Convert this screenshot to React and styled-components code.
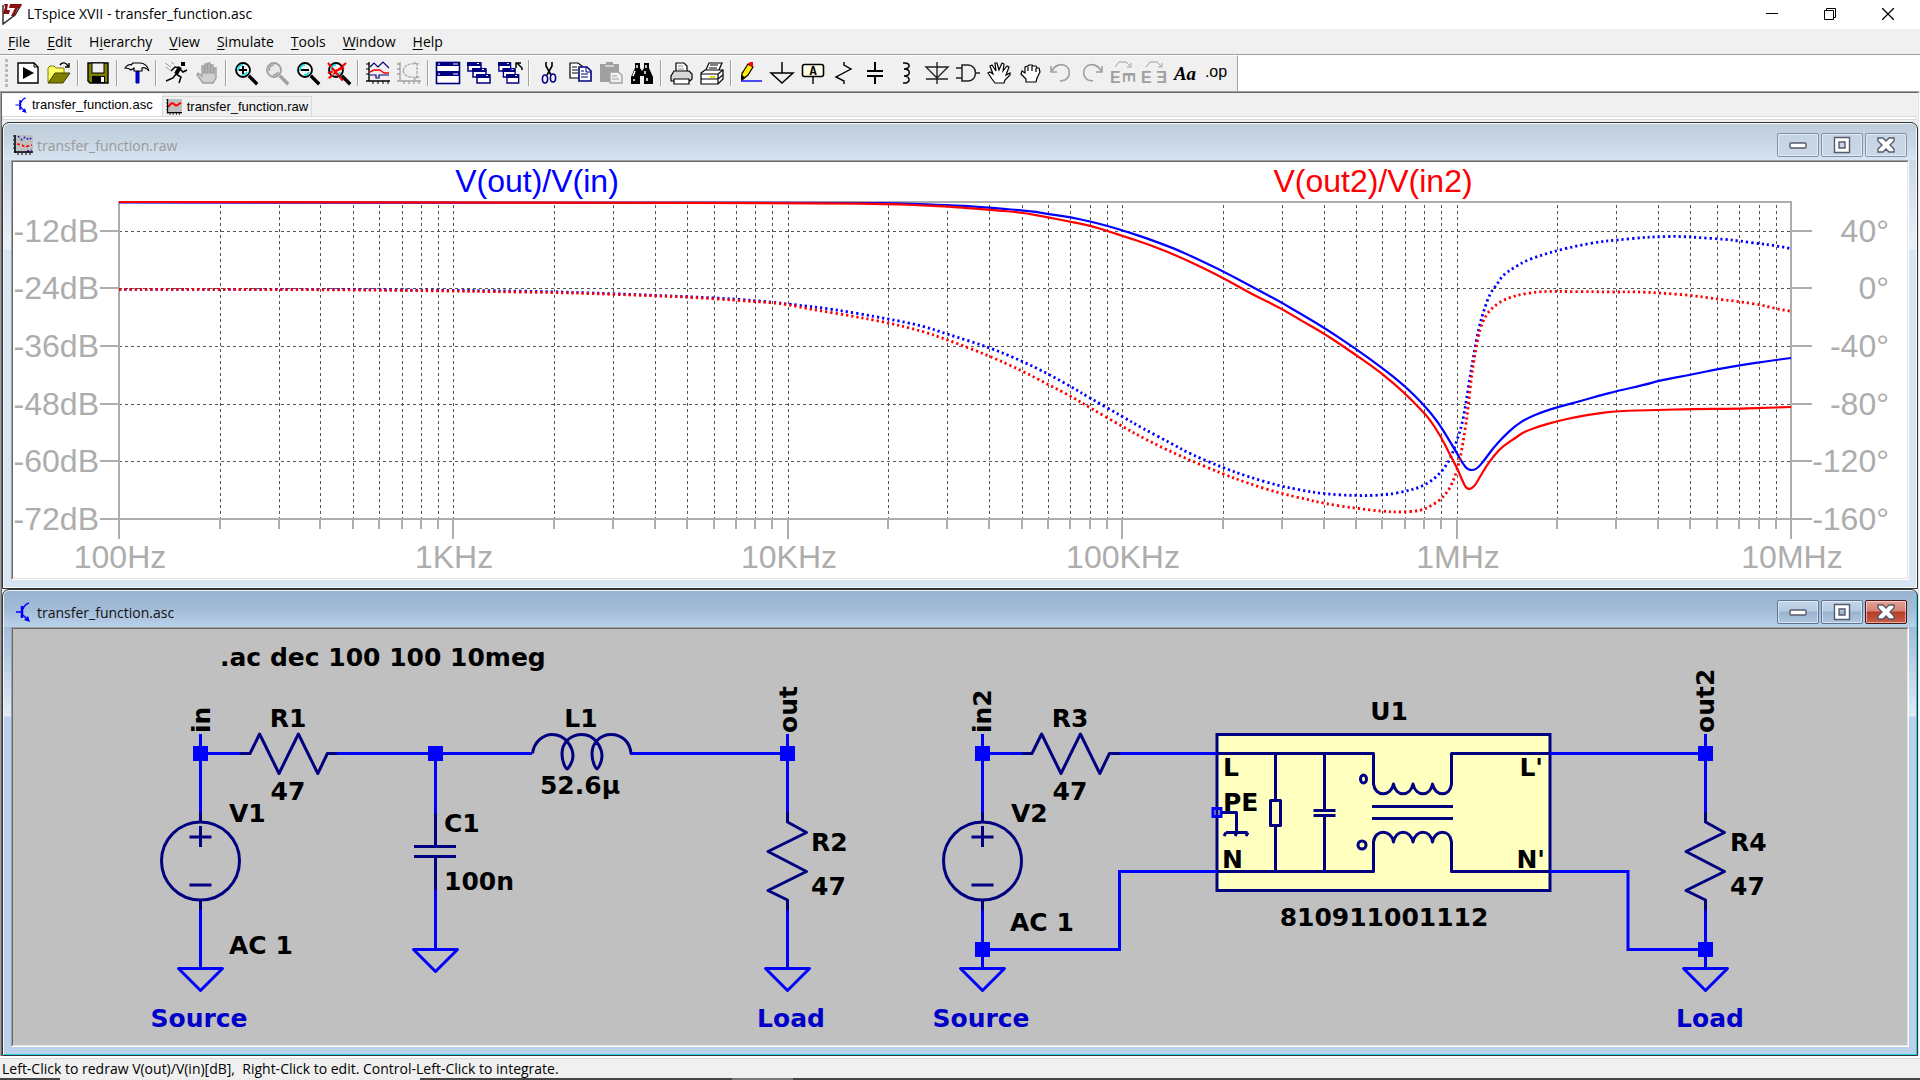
import React from 'react'
import styled, { createGlobalStyle } from 'styled-components';

const NAVY = '#000080';
const WIRE = '#0000ff';
const AXIS = '#adadad';

const GlobalStyle = createGlobalStyle`
  *{
    box-sizing: border-box;
  }

  body{
    margin: 0;
    background: #f0f0f0;
    font-family: "Open Sans", "Noto Sans", sans-serif;
    font-size: 14px;
    color: #000;
  }

  button{
    font: inherit;
    color: inherit;
    background: none;
    border: none;
    padding: 0;
  }
`;

/* ---------- small drawings ---------- */

const LogoIcon = () => (
  <svg width="20" height="22" viewBox="0 0 20 22" aria-hidden="true">
    <path d="M1 2V21L13 12L19 2" fill="#fff" stroke="#222" strokeWidth="1.4" />
    <path d="M2 1H6L5 7H8L7 11H1L3 4Z" fill="#8b1010" />
    <path d="M8 1H20L18 5H16L12 13H9L13 5H7Z" fill="#8b1010" />
  </svg>
);

const SchematicIcon = () => (
  <svg width="16" height="20" viewBox="0 0 16 20" fill="none" stroke={WIRE} strokeWidth="1.5" aria-hidden="true">
    <path d="M1 10H6M14 1C11 2 9 4 8 7" />
    <path d="M7 4V16" strokeWidth="2.5" />
    <path d="M8 13L13 18" />
    <path d="M15 20L13 14L9 18Z" fill={WIRE} stroke="none" />
  </svg>
);

const WaveformIcon = ({ dotted }) => (
  <svg width="20" height="20" viewBox="0 0 20 20" fill="none" aria-hidden="true">
    <rect x="3" y="0" width="17" height="17" fill="#c0c0c0" />
    {dotted
      ? <g strokeWidth="1.2">
        <path d="M5 1L9 5L12 2L16 5L19 2M14 16L19 15" stroke="#0000c0" strokeDasharray="2 2" />
        <path d="M4 9L9 10L12 12L19 10" stroke="#f00" strokeWidth="1.6" strokeDasharray="3 2" />
      </g>
      : <path d="M3 10C7 3 9 5 12 8C14 9 16 5 19 5" stroke="#f00" strokeWidth="2.4" />}
    <path d="M2 0V18M1 17H20" stroke="#000" strokeWidth="1.6" />
    <path d="M1 1H0M1 5H0M1 9H0M1 13H0M5 17V20M9 17V20M13 17V20M17 17V20" stroke="#000" />
  </svg>
);

const Magnifier = ({ gray, children }) => (
  <>
    <path d="M16 16L22 22" stroke={gray ? '#a0a0a0' : '#000'} strokeWidth="3.4" strokeLinecap="square" />
    <circle cx="9" cy="9" r="7" fill={gray ? '#e8e8e8' : '#f4f4f4'} stroke={gray ? '#a0a0a0' : '#000'} strokeWidth="1.8" />
    <path d="M4 10C4 6 6 4 9 4M13 11C12 14 10 14 8 14" stroke={gray ? '#a0a0a0' : '#00e5e5'} strokeWidth="1.6" fill="none" />
    {children}
  </>
);

const CascadeShape = () => (
  <>
    {[[0, 1], [5, 7], [9, 13]].map(([x, y]) => (
      <g key={x}>
        <rect x={x + 1} y={y + 1} width="13" height="8" fill="#fff" stroke={NAVY} strokeWidth="1.5" />
        <path d={`M${x} ${y + 2}H${x + 14}`} stroke={NAVY} strokeWidth="4" />
        <path d={`M${x + 10} ${y + 1.5}H${x + 12}`} stroke="#fff" strokeWidth="1" />
      </g>
    ))}
  </>
);

const TOOLS = [
  { name: 'Run', draw: <><path d="M2 2H18L22 6V22H2Z" fill="#fff" stroke="#000" strokeWidth="1.4" /><path d="M18 2V6H22" fill="none" stroke="#000" /><path d="M7 6L18 12L7 18Z" /></> },
  {
    name: 'Open', draw: <>
      <path d="M1 21V7L3 5H7L9 7H17V12" fill="#ffff66" stroke="#808000" />
      <path d="M1 22L8 12H23L16 22Z" fill="#808000" stroke="#404000" />
      <path d="M13 4C15 1 19 1 21 5M22 2V6H18" fill="none" stroke="#000" strokeWidth="1.4" />
    </>
  },
  { sep: true },
  {
    name: 'Save', draw: <>
      <path d="M2 2H22V22H4L2 20Z" fill="#808000" stroke="#000" strokeWidth="1.4" />
      <rect x="6" y="2" width="12" height="10" fill="#f0f0f0" stroke="#000" />
      <rect x="6" y="15" width="13" height="7" /><rect x="15" y="16" width="3" height="5" fill="#fff" />
    </>
  },
  { sep: true },
  {
    name: 'Control panel', draw: <>
      <path d="M11 10H14V22H11Z" fill="#0000e0" stroke="#0000a0" />
      <path d="M0 7C2 4 4 3 6 4L8 2H15C19 2 23 5 24 10C21 6 19 6 17 7V10H9V7L6 9C4 7 2 7 0 7Z" fill="#f4f4f4" stroke="#000" strokeWidth="1.2" />
    </>
  },
  { sep: true },
  {
    name: 'Simulate', draw: <>
      <rect x="17" y="1" width="4" height="4" />
      <path d="M12 13L17 16L15 22M12 13L9 17L2 20M16 7L11 6L7 10M16 8L19 11L23 9" fill="none" stroke="#000" strokeWidth="1.5" />
      <path d="M16 6L12 13" stroke="#000" strokeWidth="4" />
      <path d="M1 2L7 6M2 6L6 9M7 1L10 3" stroke="#a0a0a0" />
    </>
  },
  {
    name: 'Halt', draw: <>
      <path d="M8 22L2 14L3 12L7 15V5H9V12H10V3H12V12H13V2H15V12H16V4H18V12H19V7H21V17L18 22Z" fill="#d0d0d0" stroke="#a0a0a0" strokeWidth="1.4" />
    </>
  },
  { sep: true },
  { name: 'Zoom in', draw: <Magnifier><path d="M5 9H13M9 5V13" stroke="#000" strokeWidth="2" /></Magnifier> },
  { name: 'Pan', draw: <Magnifier gray /> },
  { name: 'Zoom out', draw: <Magnifier><path d="M5 9H13" stroke="#000" strokeWidth="2" /></Magnifier> },
  { name: 'Zoom fit', draw: <Magnifier><path d="M1 2L16 20M19 2L1 18M1 12L17 7" stroke="#f00" strokeWidth="2.2" strokeDasharray="5 1" /></Magnifier> },
  { sep: true },
  {
    name: 'Autorange', draw: <g fill="none">
      <path d="M3 1V20M0 20H24" stroke="#000" strokeWidth="1.4" />
      <path d="M0 3H3M0 8H3M0 13H3M7 20V23M12 20V23M17 20V23M22 20V23" stroke="#000" />
      <path d="M4 6L8 2L12 6L17 1L23 7M4 14H10V17H13V14H23" stroke={NAVY} strokeWidth="1.2" />
      <path d="M4 11L8 9L14 9L18 12H23" stroke="#f00" strokeWidth="1.4" />
    </g>
  },
  {
    name: 'Bode to Nyquist', draw: <g fill="none" stroke="#a0a0a0">
      <path d="M3 1V20M0 20H24M0 3H3M0 8H3M0 13H3M7 20V23M12 20V23M17 20V23M22 20V23" strokeWidth="1.3" />
      <path d="M20 2V18M6 10C8 3 13 2 23 3M6 10C8 16 13 17 23 16M17 1L20 4M17 19L20 16" strokeDasharray="3 1" strokeWidth="1.2" />
    </g>
  },
  { sep: true },
  {
    name: 'Tile', draw: <>
      <rect x="0.5" y="1.5" width="23" height="21" fill="#fff" stroke={NAVY} strokeWidth="1.6" />
      <path d="M0 3H24M0 13H24" stroke={NAVY} strokeWidth="4" /><path d="M0 10.5H24" stroke={NAVY} />
      <path d="M2 3H4M17 3H22M2 13H4M17 13H22" stroke="#fff" />
    </>
  },
  { name: 'Cascade', draw: <CascadeShape /> },
  { name: 'Close all', draw: <><g transform="scale(.9 1)"><CascadeShape /></g><path d="M24 9V7L19 2M18 7V2H23" stroke="#000" strokeWidth="1.5" fill="none" /></> },
  { sep: true },
  {
    name: 'Cut', draw: <g fill="none" strokeWidth="1.6">
      <path d="M9 1V5L14 14M15 1V5L10 14" stroke="#000" />
      <ellipse cx="8" cy="18" rx="2.6" ry="4" stroke={NAVY} /><ellipse cx="16" cy="17" rx="2.6" ry="4" stroke={NAVY} />
    </g>
  },
  {
    name: 'Copy', draw: <>
      <path d="M2 2H10L14 5V17H2Z" fill="#fff" stroke="#000" strokeWidth="1.2" />
      <path d="M4 6H9M4 9H10M4 12H10" stroke="#000" />
      <path d="M11 6H19L23 10V20H11Z" fill="#fff" stroke={NAVY} strokeWidth="1.6" />
      <path d="M18 6V11H23M13 10H16M13 13H20M13 16H20" stroke={NAVY} fill="none" />
    </>
  },
  {
    name: 'Paste', draw: <>
      <path d="M1 3H7V1H14V3H20V21H1Z" fill="#a0a0a0" />
      <path d="M6 5H15" stroke="#e0e0e0" strokeWidth="1.5" />
      <path d="M11 11H19L23 14V22H11Z" fill="#f0f0f0" stroke="#a0a0a0" strokeWidth="1.3" />
      <path d="M13 15H18M13 18H20" stroke="#a0a0a0" />
    </>
  },
  {
    name: 'Find', draw: <>
      <path d="M5 2H10V7L12 10L14 7V2H19V7L23 16V23H14V15H10V23H1V16L5 7Z" />
      <path d="M7 4V7M16 4V7M5 10L3 15M15 10V13M4 18V20M17 17V20" stroke="#fff" strokeWidth="1.5" />
    </>
  },
  { sep: true },
  {
    name: 'Print', draw: <g stroke="#000" strokeWidth="1.2">
      <path d="M7 10V2H15L18 5V10" fill="#fff" />
      <path d="M2 15L5 10H20L23 13V18L21 20H2Z" fill="#d8d8d8" />
      <path d="M5 18H20V23H5Z" fill="#fff" />
      <path d="M9 5H14M9 8H15" strokeWidth="1" stroke="#888" />
    </g>
  },
  {
    name: 'Print setup', draw: <g stroke="#000" strokeWidth="1.2">
      <path d="M5 11L9 2H22L18 11" fill="#fff" />
      <path d="M1 12L5 9H23V18L18 23H1Z" fill="#fff" />
      <path d="M1 13H18L23 9M18 13V23M1 18H18L23 14" fill="none" />
      <path d="M10 4H18M9 7H17" strokeWidth="1" /><path d="M10 16H15" stroke="#e0e000" strokeWidth="2" />
    </g>
  },
  { sep: true },
  {
    name: 'Wire', draw: <>
      <path d="M2 20H23" stroke={WIRE} strokeWidth="1.4" />
      <path d="M4 11L9 3L14 6L9 14L3 19V12Z" fill="#ffee00" stroke="#000" strokeWidth="1.2" />
      <path d="M9 3L11 1H14V5L13 6Z" fill="#f00" /><path d="M2 14V19L6 16Z" />
    </>
  },
  { name: 'Ground', draw: <path d="M12 1V12M1 12H23L12 22Z" fill="none" stroke="#000" strokeWidth="1.5" /> },
  {
    name: 'Label net', draw: <>
      <rect x="1.5" y="3.5" width="21" height="12" rx="2" fill="#ffffe8" stroke="#000" strokeWidth="1.6" />
      <path d="M12 16V23" stroke="#000" strokeWidth="1.4" />
      <text x="12" y="14" textAnchor="middle" fontFamily="Liberation Mono, monospace" fontWeight="700" fontSize="12">A</text>
    </>
  },
  { name: 'Resistor', draw: <path d="M12 1V4L19 8L4 16L12 20V23" fill="none" stroke="#000" strokeWidth="1.4" /> },
  { name: 'Capacitor', draw: <path d="M12 1V9M12 15V23M4 10H20M4 15H20" fill="none" stroke="#000" strokeWidth="2" /> },
  { name: 'Inductor', draw: <path d="M9 2C17 1 17 8 10 8C17 8 17 15 10 15C17 15 17 23 9 22" fill="none" stroke="#000" strokeWidth="1.5" /> },
  { name: 'Diode', draw: <path d="M12 1V23M1 6H23L12 17ZM1 18H23" fill="none" stroke="#222" strokeWidth="1.4" /> },
  { name: 'Component', draw: <path d="M0 7H6M0 17H6M6 4V20H12C22 20 22 4 12 4ZM19 12H24" fill="none" stroke="#222" strokeWidth="1.5" /> },
  { name: 'Move', draw: <path d="M8 22L5 18L1 12L3 11L6 13L3 5L5 4L9 10L8 2H10L12 9L15 2L17 3L16 10L20 5L22 6L19 14L23 12V14L18 19L17 22Z" fill="#fff" stroke="#000" strokeWidth="1.2" /> },
  { name: 'Drag', draw: <path d="M8 21V18L3 13L4 10L7 12V6L10 5L11 4H14L15 5H18L19 7H21L22 11L19 17L18 21Z M10 6V10M14 5V10M18 7V11" fill="#fff" stroke="#000" strokeWidth="1.2" /> },
  { name: 'Undo', draw: <path d="M2 5V11H8M3 10C6 4 12 2 17 5C22 9 21 16 16 19L11 20" fill="none" stroke="#a0a0a0" strokeWidth="1.6" /> },
  { name: 'Redo', draw: <path d="M22 5V11H16M21 10C18 4 12 2 7 5C2 9 3 16 8 19L13 20" fill="none" stroke="#a0a0a0" strokeWidth="1.6" /> },
  {
    name: 'Rotate', draw: <g fill="#a0a0a0" fontFamily="Liberation Sans, sans-serif" fontWeight="700" fontSize="16">
      <path d="M4 6L8 1H15L19 5M20 2V6H16" fill="none" stroke="#a0a0a0" />
      <text x="-1" y="22">E</text><text transform="translate(12 11) rotate(90)">E</text>
    </g>
  },
  {
    name: 'Mirror', draw: <g fill="#a0a0a0" fontFamily="Liberation Sans, sans-serif" fontWeight="700" fontSize="16">
      <path d="M4 6L8 1H15L19 5M20 2V6H16" fill="none" stroke="#a0a0a0" />
      <text x="-1" y="22">E</text><text transform="translate(25 10) rotate(180)">E</text>
    </g>
  },
  { name: 'Text', draw: <text x="12" y="19" textAnchor="middle" fontFamily="Liberation Serif, serif" fontStyle="italic" fontWeight="700" fontSize="19">Aa</text> },
  { name: 'SPICE directive', draw: <text x="12" y="16" textAnchor="middle" fontFamily="Liberation Sans, sans-serif" fontSize="16">.op</text> },
];

const MENUS = [['', 'F', 'ile'], ['', 'E', 'dit'], ['H', 'i', 'erarchy'], ['', 'V', 'iew'], ['', 'S', 'imulate'], ['', 'T', 'ools'], ['', 'W', 'indow'], ['', 'H', 'elp']];

/* ---------- bode plot ---------- */

const PLOT = { left: 119, right: 1791, top: 202, bottom: 519 };
const DECADE = (PLOT.right - PLOT.left) / 5;
const ROWS = [231, 288, 346, 404, 461, 519];
const DB = ['-12dB', '-24dB', '-36dB', '-48dB', '-60dB', '-72dB'];
const DEG = ['40°', '0°', '-40°', '-80°', '-120°', '-160°'];
const FREQ = ['100Hz', '1KHz', '10KHz', '100KHz', '1MHz', '10MHz'];

const gridColumns = [];
for (let d = 0; d < 5; d++) {
  for (let k = 1; k < 10; k++) {
    if (d + k > 1) gridColumns.push({ x: Math.round(PLOT.left + DECADE * (d + Math.log10(k))), major: k === 1 });
  }
}

const BLUE_GAIN = '119,202.5 860,202.7 895,203.3 926,204.3 966,206 990,207.7 1032,211.3 1048,214 1071,217.3 1091,221.7 1107,225.7 1122,230.3 1146,238 1175,248.7 1199,259.7 1223,271.3 1254,287.7 1280,301.7 1304,315.7 1325,328.3 1356,349 1382,367.7 1405,386 1424,405 1438,422 1448,438.3 1458,455 1463,464 1468,470 1476,470 1484,460.7 1493,448.3 1503,437.3 1515,426 1527,418.3 1543,411.7 1558,407 1578,401.7 1599,395.7 1617,391 1644,385 1659,380.7 1691,374.7 1719,368.8 1740,365.3 1768,361 1791,358';
const RED_GAIN = '119,202 560,202.5 825,203.2 889,204 926,205.5 950,206.6 966,208 990,209.6 1024,212.9 1048,217.3 1070,221.7 1090,225.7 1107,230.7 1122,235.7 1150,244.7 1183,258.3 1223,277.7 1252,294.4 1280,307.7 1302,321 1325,334 1356,355 1382,373.3 1405,393.3 1419,407.7 1429,418.3 1441,436.7 1449,452.7 1458,470 1462,480 1467,490 1474,487.3 1480,476.7 1486,466.7 1494,455.7 1503,446 1515,438.3 1524,431.7 1541,425.7 1558,421 1576,417 1595,413.7 1617,411 1659,410 1691,409 1736,408.6 1760,408 1791,407';
const BLUE_PHASE = '119,289.3 354,289.3 402,290 449,290.3 494,290.7 554,291.7 592,293 640,294.7 687,296.7 736,299 773,302.3 788,304 832,309 889,319 922,325.7 947,334 989,347.3 1022,361 1049,374.3 1071,386.7 1090,398 1122,416.3 1142,428 1171,443.3 1191,454.3 1223,467.7 1248,476.7 1280,486 1304,490.7 1325,494 1356,495.7 1382,495.3 1405,491.7 1424,486 1439,475 1450,460 1456,443.3 1462,425 1466,403.3 1470,376.7 1474,353.3 1479,326.7 1484,310 1490,293.3 1497,284.3 1503,275 1513,268.3 1525,261 1541,255.3 1558,250.3 1578,245.7 1599,241.7 1617,240 1640,237.7 1659,236.7 1680,236.3 1701,237.7 1725,239.3 1740,241 1760,243.7 1776,245.7 1791,248.7';
const RED_PHASE = '119,289.3 302,289.5 402,290.4 449,291 494,291.7 554,292.5 592,293.6 640,295.3 687,297 736,300.3 773,302.7 788,304.7 811,309.3 852,316 889,323 922,331 947,339.7 989,355.7 1022,370.7 1049,385 1071,396.3 1090,407.7 1122,426.3 1150,441.7 1183,457.3 1223,474 1248,483.3 1280,493.3 1304,498.7 1325,503.7 1356,508.3 1382,511.3 1400,512.3 1421,510.7 1431,506 1441,499.3 1449,490 1455,476.7 1460,460 1464,436.7 1468,410 1471,380 1475,353.3 1480,328.3 1486,315 1494,306 1505,299 1521,294.3 1541,291.3 1566,291.5 1595,291.7 1617,292.1 1635,291.7 1660,293 1691,295.3 1719,299.3 1740,301.7 1760,304.7 1776,308.7 1791,311.3';

// quadratic segments between the midpoints of the samples
const smooth = (samples) => {
  const p = samples.split(' ').map(pair => pair.split(',').map(Number));
  let d = `M${p[0]}`;
  for (let i = 1; i < p.length - 1; i++) {
    d += `Q${p[i]} ${(p[i][0] + p[i + 1][0]) / 2},${(p[i][1] + p[i + 1][1]) / 2}`;
  }
  return d + `L${p[p.length - 1]}`;
};

const BodePlot = () => (
  <Canvas viewBox="13 162 1894 416" $background="#fff" role="img" aria-label="Transfer function plot">
    <g stroke="#555" strokeDasharray="3 3" shapeRendering="crispEdges">
      {ROWS.slice(0, 5).map(y => <path key={y} d={`M${PLOT.left} ${y + 0.5}H${PLOT.right}`} />)}
      {gridColumns.map(({ x }) => <path key={x} d={`M${x + 0.5} ${PLOT.top + 3}V${PLOT.bottom}`} />)}
    </g>
    <g stroke={AXIS} strokeWidth="2" fill="none" shapeRendering="crispEdges">
      <path d={`M${PLOT.left} 539V${PLOT.top}H${PLOT.right}V539`} />
      {ROWS.map(y => <path key={y} d={`M100 ${y}H${PLOT.left}M${PLOT.right} ${y}H1812`} />)}
      <path d={`M${PLOT.left} ${PLOT.bottom}H${PLOT.right}`} />
      {gridColumns.map(({ x, major }) => <path key={x} d={`M${x} ${PLOT.bottom}V${major ? 539 : 529}`} />)}
    </g>
    <g fill="none" strokeWidth="2.2">
      <path d={smooth(BLUE_GAIN)} stroke="#00f" />
      <path d={smooth(BLUE_PHASE)} stroke="#00f" strokeWidth="2.8" strokeDasharray="2.2 3" />
      <path d={smooth(RED_GAIN)} stroke="#f00" />
      <path d={smooth(RED_PHASE)} stroke="#f00" strokeWidth="2.8" strokeDasharray="2.2 3" />
    </g>
    <PlotText x="537" y="192" $color="#00f">V(out)/V(in)</PlotText>
    <PlotText x="1373" y="192" $color="#f00">V(out2)/V(in2)</PlotText>
    {DB.map((label, i) => <PlotText key={label} x="99" y={ROWS[i] + 11} $anchor="end">{label}</PlotText>)}
    {DEG.map((label, i) => <PlotText key={label} x="1889" y={ROWS[i] + 11} $anchor="end">{label}</PlotText>)}
    {FREQ.map((label, i) => <PlotText key={label} x={Math.round(PLOT.left + 1 + DECADE * i)} y="568">{label}</PlotText>)}
  </Canvas>
);

/* ---------- schematic ---------- */

const Node = ({ x, y }) => <rect x={x - 7.5} y={y - 7.5} width="15" height="15" fill={WIRE} />;

const Ground = ({ x, y }) => <path d={`M${x - 22} ${y}H${x + 22}L${x} ${y + 22}Z`} stroke={WIRE} />;

const ResistorH = ({ x, y }) => (
  <path d={`M${x - 48} ${y}h10l9.6 -19.5l19.4 39.5l19.4 -39.5l19.4 39.5l9.6 -20h10`} />
);

const ResistorV = ({ x, y }) => (
  <path d={`M${x} ${y}v10l19 10.5l-38.5 19l38.5 20l-38.5 19l19.5 9.5v10`} />
);

const VoltageSource = ({ x, y }) => (
  <>
    <circle cx={x} cy={y} r="39" />
    <path d={`M${x} ${y - 49}v10M${x} ${y + 39}v10M${x - 11} ${y - 24}h22M${x} ${y - 35}v21M${x - 11} ${y + 24}h22`} />
  </>
);

const Schematic = () => (
  <Canvas viewBox="13 629 1894 416" $background="#c0c0c0" role="img" aria-label="Schematic">
    <rect x="1217" y="734.5" width="333" height="156" fill="#ffffc0" stroke={NAVY} strokeWidth="3" />

    <g fill="none" stroke={WIRE} strokeWidth="3">
      <path d="M200.5 734V812M200.5 753.5H240M200.5 910V968M336 753.5H532M435.5 753.5V813M435.5 890V949M630 753.5H787.5M787.5 734V813M787.5 909V968" />
      <path d="M982.5 734V812M982.5 753.5H1022M1118 753.5H1217M982.5 910V968M982.5 949.5H1119.5V871.5H1217" />
      <path d="M1550 753.5H1705.5M1705.5 734V813M1705.5 909V968M1550 871.5H1628V949.5H1705.5" />
    </g>

    <g fill="none" stroke={NAVY} strokeWidth="3" strokeLinejoin="round">
      <ResistorH x={288} y={753.5} />
      <ResistorH x={1070} y={753.5} />
      <ResistorV x={787.5} y={812} />
      <ResistorV x={1705.5} y={812} />
      <VoltageSource x={200.5} y={861} />
      <VoltageSource x={982.5} y={861} />
      <path d="M435.5 813V846.5M414 846.5H456M414 856.5H456M435.5 856.5V890" />
      <path d="M532.5 753.5C534 742 543 734.5 552 734.5C566 734.5 573 748 573 756C573 762 568 769 567 769C566 769 562 762 562 754C562 742 571 734.5 582 734.5C595 734.5 602 748 602 756C602 762 598 769 597 769C596 769 592 762 592 754C592 742 601 734.5 611 734.5C622 734.5 630 742 631 753.5" />
      <Ground x={200.5} y={968.5} />
      <Ground x={435.5} y={949.5} />
      <Ground x={787.5} y={968.5} />
      <Ground x={982.5} y={968.5} />
      <Ground x={1705.5} y={968.5} />

      {/* line filter internals */}
      <path d="M1217 753.5H1373.5V784C1375 797 1391 797 1393.5 784C1396 797 1410 797 1413 784C1416 797 1430 797 1432.5 784C1435 797 1450 797 1451.5 784V753.5H1550" />
      <path d="M1217 871.5H1373.5V842C1375 829 1391 829 1393.5 842C1396 829 1410 829 1413 842C1416 829 1430 829 1432.5 842C1435 829 1450 829 1451.5 842V871.5H1550" />
      <path d="M1372 806.5H1453M1372 818.5H1453" />
      <path d="M1275.5 753.5V800M1275.5 825V871.5M1270.5 800.5H1280.5V825.5H1270.5Z" />
      <path d="M1324.5 753.5V810M1324.5 815V871.5M1313.5 810.5H1335.5M1313.5 815.5H1335.5" />
      <ellipse cx="1363.5" cy="779" rx="3" ry="4" />
      <ellipse cx="1362" cy="845" rx="4" ry="4" />
      <path d="M1221 812.5H1236.5V832.5M1226 832.5H1247.5M1226 832.5L1224 836M1237 832.5L1235 836M1248 832.5L1246 836" />
    </g>
    <rect x="1213" y="808.5" width="8" height="8" fill="none" stroke={WIRE} strokeWidth="3" />

    <Node x={200.5} y={753.5} />
    <Node x={435.5} y={753.5} />
    <Node x={787.5} y={753.5} />
    <Node x={982.5} y={753.5} />
    <Node x={982.5} y={949.5} />
    <Node x={1705.5} y={753.5} />
    <Node x={1705.5} y={949.5} />

    <Label x="220" y="666">.ac dec 100 100 10meg</Label>
    <Label transform="translate(210 733) rotate(-90)">in</Label>
    <Label transform="translate(797 733) rotate(-90)">out</Label>
    <Label transform="translate(991 733) rotate(-90)">in2</Label>
    <Label transform="translate(1714 733) rotate(-90)">out2</Label>
    <Label x="288" y="727" $anchor="middle">R1</Label>
    <Label x="288" y="800" $anchor="middle">47</Label>
    <Label x="229" y="822">V1</Label>
    <Label x="229" y="954">AC 1</Label>
    <Label x="444" y="832">C1</Label>
    <Label x="444" y="890">100n</Label>
    <Label x="581" y="727" $anchor="middle">L1</Label>
    <Label x="580" y="794" $anchor="middle">52.6µ</Label>
    <Label x="811" y="851">R2</Label>
    <Label x="811" y="895">47</Label>
    <Label x="1070" y="727" $anchor="middle">R3</Label>
    <Label x="1070" y="800" $anchor="middle">47</Label>
    <Label x="1011" y="822">V2</Label>
    <Label x="1010" y="931">AC 1</Label>
    <Label x="1389" y="720" $anchor="middle">U1</Label>
    <Label x="1384" y="926" $anchor="middle">810911001112</Label>
    <Label x="1223" y="776">L</Label>
    <Label x="1223" y="811">PE</Label>
    <Label x="1222" y="868">N</Label>
    <Label x="1543" y="776" $anchor="end">L'</Label>
    <Label x="1545" y="868" $anchor="end">N'</Label>
    <Label x="1730" y="851">R4</Label>
    <Label x="1730" y="895">47</Label>
    <Label x="199" y="1027" $anchor="middle" $color="#0000c8">Source</Label>
    <Label x="791" y="1027" $anchor="middle" $color="#0000c8">Load</Label>
    <Label x="981" y="1027" $anchor="middle" $color="#0000c8">Source</Label>
    <Label x="1710" y="1027" $anchor="middle" $color="#0000c8">Load</Label>
  </Canvas>
);

/* ---------- windows ---------- */

const ChildWindow = ({ title, icon, active, children }) => (
  <Frame $active={active}>
    <FrameTitle $active={active}>
      <FrameIcon>{icon}</FrameIcon>
      <FrameName>{title}</FrameName>
      <FrameButton aria-label="Minimize" $active={active}>
        <svg width="18" height="18" viewBox="0 0 18 18"><rect x="1" y="7" width="16" height="5" rx="1" fill="#fff" stroke="#565a6e" strokeWidth="1.4" /></svg>
      </FrameButton>
      <FrameButton aria-label="Restore" $active={active}>
        <svg width="18" height="18" viewBox="0 0 18 18"><path fillRule="evenodd" d="M1.5 1.5H16.5V16.5H1.5ZM6 6H12V12H6Z" fill="#fff" stroke="#565a6e" strokeWidth="1.4" /></svg>
      </FrameButton>
      <FrameButton aria-label="Close" $active={active} $danger={active}>
        <svg width="18" height="18" viewBox="0 0 18 18"><path d="M1 2H6L9 5L12 2H17V5L13 9L17 13V16H12L9 13L6 16H1V13L5 9L1 5Z" fill="#fff" stroke="#565a6e" strokeWidth="1.4" /></svg>
      </FrameButton>
    </FrameTitle>
    <Sunken><SunkenInner>{children}</SunkenInner></Sunken>
  </Frame>
);

export default function App() {
  return (
    <Page>
      <GlobalStyle />
      <TitleBar>
        <LogoIcon />
        <AppName>LTspice XVII - transfer_function.asc</AppName>
        <CaptionButton aria-label="Minimize"><svg width="12" height="12" stroke="#000"><path d="M0 5.5H12" /></svg></CaptionButton>
        <CaptionButton aria-label="Restore"><svg width="12" height="12" fill="none" stroke="#000"><path d="M.5 2.5H9.5V11.5H.5ZM2.5 2.5V.5H11.5V9.5H9.5" /></svg></CaptionButton>
        <CaptionButton aria-label="Close"><svg width="12" height="12" stroke="#000" strokeWidth="1.3"><path d="M0 0L12 12M12 0L0 12" /></svg></CaptionButton>
      </TitleBar>
      <MenuBar>
        {MENUS.map(([before, key, after]) => <MenuItem key={key + after}>{before}<u>{key}</u>{after}</MenuItem>)}
      </MenuBar>
      <ToolbarRow>
        <Toolbar>
          <Grip />
          {TOOLS.map((tool, i) => tool.sep
            ? <Separator key={i} />
            : <ToolButton key={i} aria-label={tool.name}><svg width="24" height="24" viewBox="0 0 24 24">{tool.draw}</svg></ToolButton>)}
        </Toolbar>
      </ToolbarRow>
      <Workspace>
        <WorkspaceInner>
          <Tabs>
            <Tab $selected><SchematicIcon />transfer_function.asc</Tab>
            <Tab><WaveformIcon />transfer_function.raw</Tab>
          </Tabs>
          <TabBase />
          <ChildWindow title="transfer_function.raw" icon={<WaveformIcon dotted />}>
            <BodePlot />
          </ChildWindow>
          <ChildWindow title="transfer_function.asc" icon={<SchematicIcon />} active>
            <Schematic />
          </ChildWindow>
        </WorkspaceInner>
      </Workspace>
      <StatusBar>Left-Click to redraw V(out)/V(in)[dB],&nbsp; Right-Click to edit. Control-Left-Click to integrate.</StatusBar>
      <TaskEdge />
    </Page>
  )
}

const Page = styled.div`
  display: flex;
  flex-direction: column;
  min-height: 100vh;
`;

const TitleBar = styled.header`
  display: flex;
  align-items: center;
  height: 29px;
  padding: 0 3px 2px 2px;
  background: #fff;
`;

const AppName = styled.span`
  flex: 1;
  margin-left: 5px;
`;

const CaptionButton = styled.button`
  display: flex;
  align-items: center;
  justify-content: center;
  width: 58px;
  height: 27px;
`;

const MenuBar = styled.nav`
  display: flex;
  gap: 17px;
  height: 26px;
  padding: 0 8px;
  border-bottom: 1px solid #a0a0a0;
`;

const MenuItem = styled.button`
  line-height: 25px;

  u{
    text-underline-offset: 2px;
  }
`;

const ToolbarRow = styled.div`
  background: #fff;
`;

const Toolbar = styled.div`
  display: flex;
  align-items: center;
  width: fit-content;
  height: 36px;
  padding: 0 6px 2px 0;
  background: #f0f0f0;
  border-top: 1px solid #fff;
  border-right: 1px solid #a0a0a0;
`;

const Grip = styled.div`
  width: 3px;
  height: 28px;
  margin: 0 4px 0 5px;
  background: repeating-linear-gradient(#b8b8b8 0 3px, #f0f0f0 3px 5px);
`;

const ToolButton = styled.button`
  display: flex;
  justify-content: center;
  width: 31px;

  svg{
    overflow: visible;
  }
`;

const Separator = styled.div`
  width: 2px;
  height: 26px;
  margin: 0 3px;
  border-left: 1px solid #a0a0a0;
  border-right: 1px solid #fff;
`;

const Workspace = styled.main`
  border: 1px solid #a0a0a0;
  border-right-color: #fff;
  border-bottom: none;
`;

const WorkspaceInner = styled.div`
  border: 1px solid #696969;
  border-right-color: #e3e3e3;
  border-bottom: none;
`;

const Tabs = styled.div`
  display: flex;
  align-items: flex-end;
  height: 23px;
`;

const Tab = styled.button`
  display: flex;
  align-items: center;
  gap: 3px;
  height: ${props => props.$selected ? "22px" : "20px"};
  padding: ${props => props.$selected ? "0 8px 2px 10px" : "0 3px 0 1px"};
  font-family: "Liberation Sans", Arial, sans-serif;
  font-size: 13px;
  background: ${props => props.$selected ? "#fff" : "#f0f0f0"};
  border: 1px solid ${props => props.$selected ? "#fff" : "#d9d9d9"};
  border-bottom: none;

  svg{
    height: 16px;
  }
`;

const TabBase = styled.div`
  height: 4px;
  margin: 0 2px 2px 0;
  background: #fff;
  border: 1px solid #d9d9d9;
`;

const Frame = styled.section`
  padding: 1px 8px 8px;
  background: ${props => props.$active
    ? "linear-gradient(#99b4d1, #a4bedb 40px, #dfebf7 126px, #b9d1ea 127px)"
    : "linear-gradient(#bfcddb, #ccd9e6 40px, #e9f1f9 126px, #d7e4f2 127px)"};
  border: 1px solid #333;
  border-radius: 7px 7px 0 0;
  box-shadow: inset 1px 1px 0 #f4f8fc, inset -1px -1px 0 ${props => props.$active ? "#22d0ea" : "#f4f8fc"};
`;

const FrameTitle = styled.div`
  display: flex;
  align-items: center;
  gap: 2px;
  height: 36px;
  margin: 0 -7px;
  padding: 6px 9px 0 9px;
  color: ${props => props.$active ? "#111" : "#9a9a9a"};
  background: ${props => props.$active
    ? "linear-gradient(#99b4d1, #a2bbd7 50%, #b9d1ea)"
    : "linear-gradient(#bfcddb, #c8d5e2 50%, #d7e4f2)"};
  border-radius: 5px 5px 0 0;
`;

const FrameIcon = styled.span`
  display: flex;
  justify-content: center;
  width: 20px;
`;

const FrameName = styled.span`
  flex: 1;
  margin-left: 2px;
`;

const FrameButton = styled.button`
  display: flex;
  align-items: center;
  justify-content: center;
  width: 42px;
  height: 24px;
  border: 1px solid ${props => props.$danger ? "#4a1512" : props.$active ? "#5f7590" : "#8090ac"};
  border-radius: 2px;
  box-shadow: inset 0 0 0 1px rgba(255, 255, 255, 0.5);
  background: ${props => props.$danger
    ? "linear-gradient(#e6a096, #d68274 46%, #b73a22 50%, #c9604a)"
    : props.$active
      ? "linear-gradient(#c4d6e8, #b4cae0 46%, #98b2ce 50%, #b0c8e0)"
      : "linear-gradient(#c6d3e1, #cad8e8)"};
`;

const Sunken = styled.div`
  border: 1px solid #a0a0a0;
  border-right-color: #fff;
  border-bottom-color: #fff;
`;

const SunkenInner = styled.div`
  border: 1px solid #696969;
  border-right-color: #e3e3e3;
  border-bottom-color: #e3e3e3;
`;

const Canvas = styled.svg`
  display: block;
  width: 100%;
  height: auto;
  background: ${props => props.$background};
`;

const PlotText = styled.text`
  font-family: "Liberation Sans", Arial, sans-serif;
  font-size: 32px;
  fill: ${props => props.$color || AXIS};
  text-anchor: ${props => props.$anchor || "middle"};
`;

const Label = styled.text`
  font-family: "DejaVu Sans", Verdana, sans-serif;
  font-size: 25px;
  font-weight: 700;
  fill: ${props => props.$color || "#000"};
  text-anchor: ${props => props.$anchor || "start"};
`;

const StatusBar = styled.footer`
  height: 22px;
  padding: 3px 0 0 2px;
  line-height: 19px;
  white-space: nowrap;
  box-shadow: inset 0 2px 0 #fff, inset 0 3px 0 #d9d9d9;
`;

const TaskEdge = styled.div`
  height: 2px;
  background: linear-gradient(90deg, #444 60px, #eee 60px 420px, #444 420px 732px, #777 732px 793px, #444 793px);
`;
